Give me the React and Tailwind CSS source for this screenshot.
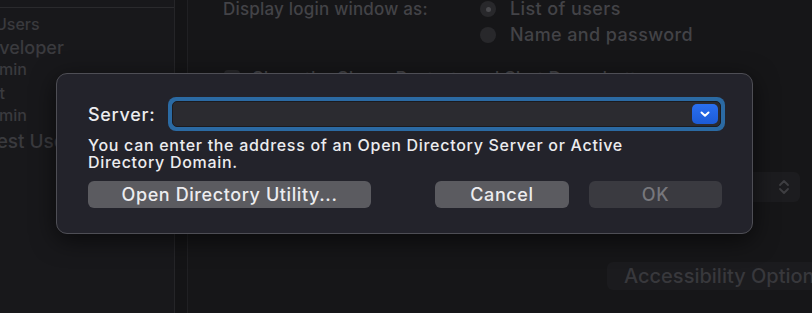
import React from 'react';

const font = { fontFamily: 'Inter, "Noto Sans", sans-serif' };

const SidebarItem = ({ text, shift, size = 'text-[18px]', y }) => (
    <div className={`${size} ${y} whitespace-nowrap text-[#3a3a3e]`} style={{ marginLeft: shift }}>
        {text}
    </div>
);

const App = () => {
    return (
        <div className="relative w-[812px] h-[313px] overflow-hidden bg-[#161618] flex" style={font}>
            {/* Sidebar (dimmed behind the sheet) */}
            <div className="w-[175px] shrink-0 bg-[#18181b] border-r border-[#252528] overflow-hidden">
                <div className="h-[8px] border-b border-[#2a2a2d]" />
                <div className="flex flex-col leading-none font-medium">
                    <SidebarItem text="Users" shift="-5px" size="text-[16px]" y="mt-[8px] text-[#2e2e32]" />
                    <SidebarItem text="Developer" shift="-24px" y="mt-[7px]" />
                    <SidebarItem text="Admin" shift="-22px" size="text-[16px]" y="mt-[4px]" />
                    <SidebarItem text="Guest" shift="-40px" size="text-[16px]" y="mt-[8px]" />
                    <SidebarItem text="Admin" shift="-22px" size="text-[16px]" y="mt-[6px]" />
                    <SidebarItem text="Guest User" shift="-29px" size="text-[19px]" y="mt-[9px]" />
                </div>
            </div>
            <div className="w-[13px] shrink-0 bg-[#141416] border-r border-[#202023]" />

            {/* Main settings area */}
            <div className="flex-1 relative font-medium text-[#434347]">
                <div className="flex pl-[35px] text-[18px] leading-[26px] -mt-[4px]">
                    <div className="w-[257px] text-[17px] tracking-[0.2px]">Display login window as:</div>
                    <div className="flex flex-col tracking-[0.4px]">
                        <div className="flex items-center gap-[14px]">
                            <span className="w-[16px] h-[16px] rounded-full bg-[#28282b] flex items-center justify-center">
                                <span className="w-[5px] h-[5px] rounded-full bg-[#4a4a4e]" />
                            </span>
                            List of users
                        </div>
                        <div className="flex items-center gap-[14px]">
                            <span className="w-[16px] h-[16px] rounded-full bg-[#28282b]" />
                            Name and password
                        </div>
                    </div>
                </div>
                <div className="flex items-start gap-3 pl-[36px] mt-[22px]">
                    <span className="w-[16px] h-[16px] rounded-[4px] bg-[#28282b]" />
                    <span className="text-[18px] leading-[18px]">Show the Sleep, Restart, and Shut Down buttons</span>
                </div>
                <div className="flex justify-end mt-[84px] pr-[12px]">
                    <div className="w-[300px] h-[30px] rounded-[6px] bg-[#1c1c1f] flex items-center justify-end pr-[10px]">
                        <svg width="12" height="18" viewBox="0 0 12 18" fill="none" stroke="#3e3e42" strokeWidth="1.8" strokeLinecap="round" strokeLinejoin="round">
                            <path d="M2 7l4-4 4 4" />
                            <path d="M2 11l4 4 4-4" />
                        </svg>
                    </div>
                </div>
                <div className="flex justify-end mt-[60px]">
                    <div className="w-[205px] h-[28px] rounded-l-[6px] bg-[#1b1b1e] flex items-center pl-[17px] text-[20px] whitespace-nowrap text-[#38383c] overflow-hidden">
                        Accessibility Options...
                    </div>
                </div>
            </div>

            {/* Sheet dialog */}
            <div className="absolute left-[56px] top-[73px] w-[697px] h-[161px] rounded-[11px] bg-[#23232b] border border-[#4e4e55] shadow-[0_6px_24px_rgba(0,0,0,0.6)] pl-[31px] pr-[27px] pt-[23px] text-[#ececef]">
                <div className="flex items-center">
                    <div className="w-[80px] text-[18px] font-medium tracking-[0.7px]">Server:</div>
                    <div className="flex-1 h-[34px] rounded-[8px] bg-[#2b6aa3] p-[4px]">
                        <div className="h-full rounded-[5px] bg-[#2b2b30] border border-[#1b1b1f] flex items-center justify-end pr-[2px]">
                            <div className="w-[26px] h-[20px] rounded-[5px] bg-gradient-to-b from-[#2a6ff0] to-[#1c5bd6] flex items-center justify-center">
                                <svg width="12" height="8" viewBox="0 0 12 8" fill="none" stroke="#ffffff" strokeWidth="2" strokeLinecap="round" strokeLinejoin="round">
                                    <path d="M2.5 2.5l3.5 3.2 3.5-3.2" />
                                </svg>
                            </div>
                        </div>
                    </div>
                </div>
                <p className="mt-[6px] text-[16px] leading-[17px] font-medium tracking-[0.7px]">
                    You can enter the address of an Open Directory Server or Active<br />
                    Directory Domain.
                </p>
                <div className="flex mt-[10px] text-[18px] font-medium tracking-[0.6px]">
                    <button className="w-[283px] h-[27px] rounded-[6px] bg-[#5b5b60] text-[#ececef]">
                        Open Directory Utility...
                    </button>
                    <button className="ml-[64px] w-[134px] h-[27px] rounded-[6px] bg-[#5b5b60] text-[#ececef]">
                        Cancel
                    </button>
                    <button className="ml-[20px] w-[133px] h-[27px] rounded-[6px] bg-[#3a3a40] text-[#77777c]">
                        OK
                    </button>
                </div>
            </div>
        </div>
    );
};

export default App;
